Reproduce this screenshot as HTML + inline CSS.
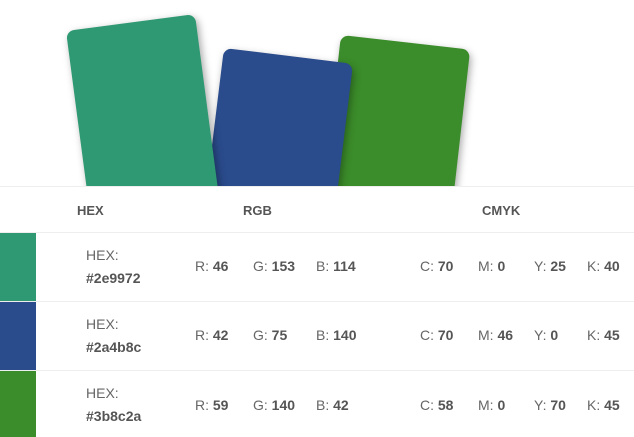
<!DOCTYPE html>
<html><head><style>
body{margin:0;width:634px;height:437px;background:#fff;font-family:"Liberation Sans",sans-serif;color:#666;font-size:14px;overflow:hidden;position:relative}
.top{position:absolute;left:0;top:0;width:634px;height:187px;overflow:hidden;border-bottom:1px solid #eee;box-sizing:border-box}
.card{position:absolute;width:130px;height:260px;border-radius:8px;transform-origin:0 0;box-shadow:2px 3px 8px rgba(0,0,0,.35)}
.t{position:absolute;white-space:nowrap}
b{color:#555}
.h{font-weight:bold;color:#555;top:203px;font-size:13px}
.line{position:absolute;left:0;width:634px;height:1px;background:#eee}
.sw{position:absolute;left:0;width:36px}
</style></head><body>
<div class="top">
<div class="card" style="left:341px;top:35px;background:#3b8c2a;transform:rotate(6.5deg)"></div>
<div class="card" style="left:224px;top:48px;background:#2a4b8c;transform:rotate(7deg)"></div>
<div class="card" style="left:66px;top:31px;background:#2e9972;transform:rotate(-7.5deg)"></div>
</div>
<div class="t h" style="left:77px">HEX</div>
<div class="t h" style="left:243px">RGB</div>
<div class="t h" style="left:482px">CMYK</div>
<div class="line" style="top:232px"></div>
<div class="line" style="top:301px"></div>
<div class="line" style="top:370px"></div>
<div class="sw" style="top:233px;height:68px;background:#2e9972"></div>
<div class="sw" style="top:302px;height:68px;background:#2a4b8c"></div>
<div class="sw" style="top:371px;height:66px;background:#3b8c2a"></div>

<div class="t" style="left:86px;top:247px">HEX:</div><div class="t" style="left:86px;top:270px"><b>#2e9972</b></div>
<div class="t" style="left:195px;top:258px">R: <b>46</b></div><div class="t" style="left:253px;top:258px">G: <b>153</b></div><div class="t" style="left:316px;top:258px">B: <b>114</b></div>
<div class="t" style="left:420px;top:258px">C: <b>70</b></div><div class="t" style="left:478px;top:258px">M: <b>0</b></div><div class="t" style="left:534px;top:258px">Y: <b>25</b></div><div class="t" style="left:587px;top:258px">K: <b>40</b></div>

<div class="t" style="left:86px;top:316px">HEX:</div><div class="t" style="left:86px;top:339px"><b>#2a4b8c</b></div>
<div class="t" style="left:195px;top:327px">R: <b>42</b></div><div class="t" style="left:253px;top:327px">G: <b>75</b></div><div class="t" style="left:316px;top:327px">B: <b>140</b></div>
<div class="t" style="left:420px;top:327px">C: <b>70</b></div><div class="t" style="left:478px;top:327px">M: <b>46</b></div><div class="t" style="left:534px;top:327px">Y: <b>0</b></div><div class="t" style="left:587px;top:327px">K: <b>45</b></div>

<div class="t" style="left:86px;top:385px">HEX:</div><div class="t" style="left:86px;top:408px"><b>#3b8c2a</b></div>
<div class="t" style="left:195px;top:397px">R: <b>59</b></div><div class="t" style="left:253px;top:397px">G: <b>140</b></div><div class="t" style="left:316px;top:397px">B: <b>42</b></div>
<div class="t" style="left:420px;top:397px">C: <b>58</b></div><div class="t" style="left:478px;top:397px">M: <b>0</b></div><div class="t" style="left:534px;top:397px">Y: <b>70</b></div><div class="t" style="left:587px;top:397px">K: <b>45</b></div>
</body></html>
